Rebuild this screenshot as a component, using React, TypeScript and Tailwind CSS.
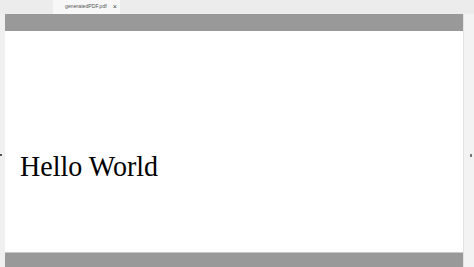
export default function App() {
  return (
    <div className="flex h-[267px] w-[474px] flex-col overflow-hidden bg-[#efefef] font-['Liberation_Sans',sans-serif]">
      {/* tab strip */}
      <div className="flex h-[14px] shrink-0 items-stretch bg-[#ececec]">
        <div className="w-[53px]" />
        <div className="flex w-[67px] items-center gap-[6px] bg-[#f7f7f7] pl-[12px] text-[5.2px] text-[#555]">
          <span className="whitespace-nowrap">generatedPDF.pdf</span>
          <span className="text-[7px] text-[#444]">×</span>
        </div>
      </div>

      <div className="flex flex-1">
        <div className="relative w-[5px] bg-[#f0f0f0]">
          <span className="absolute left-0 top-[140px] h-[2px] w-[2px] bg-[#555]" />
        </div>

        <div className="flex flex-1 flex-col border-r border-[#e2e2e2]">
          <div className="h-[17px] bg-[#999999]" />
          <div className="flex flex-1 items-center bg-white pl-[15px] pt-[50px]">
            <span className="inline-block origin-bottom scale-y-[1.08] font-['Liberation_Serif',serif] text-[28px] leading-none text-black">
              Hello World
            </span>
          </div>
          <div className="h-[15px] border-t border-[#c8c8c8] bg-[#999999]" />
        </div>

        <div className="relative w-[10px] bg-[#f3f3f3]">
          <span className="absolute right-[2px] top-[140px] h-[3px] w-[2px] bg-[#777]" />
        </div>
      </div>
    </div>
  );
}
